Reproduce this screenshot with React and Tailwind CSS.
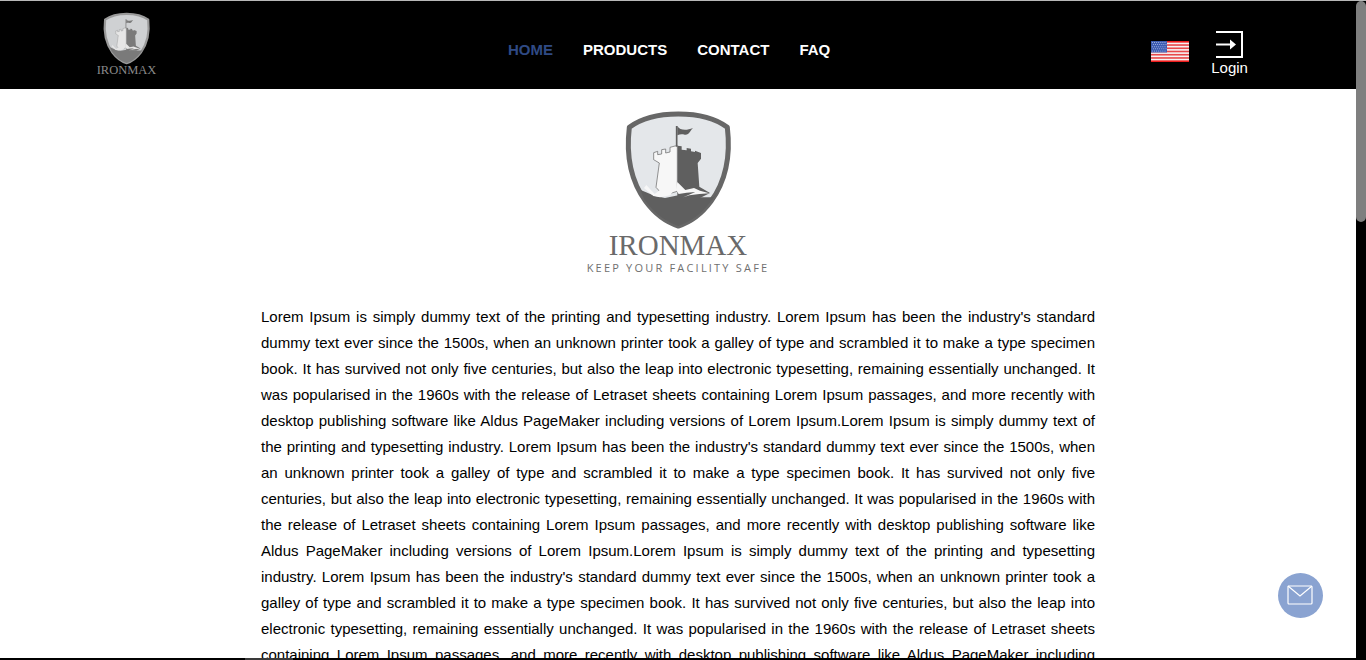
const LOREM = "Lorem Ipsum is simply dummy text of the printing and typesetting industry. Lorem Ipsum has been the industry's standard dummy text ever since the 1500s, when an unknown printer took a galley of type and scrambled it to make a type specimen book. It has survived not only five centuries, but also the leap into electronic typesetting, remaining essentially unchanged. It was popularised in the 1960s with the release of Letraset sheets containing Lorem Ipsum passages, and more recently with desktop publishing software like Aldus PageMaker including versions of Lorem Ipsum.";

function Shield({ rim, sky, ground, light, dark, className }) {
  return (
    <svg viewBox="0 0 348 372" className={className}>
      <path d="M175 18 C230 18 285 30 322 58 C333 150 313 225 273 280 C245 318 210 343 175 354 C140 343 105 318 77 280 C37 225 17 150 28 58 C65 30 120 18 175 18 Z" fill={sky} stroke={rim} strokeWidth="15" strokeLinejoin="round" />
      <path d="M62 246 L105 264 L135 270 L175 262 L215 268 L280 268 L298 244 C290 258 282 270 273 280 C245 318 210 343 175 354 C140 343 105 318 77 280 C70 272 66 258 62 246 Z" fill={ground} />
      <path d="M172 113 L185 115 L185 125 L200 127 L200 120 L213 122 L213 130 L225 132 L225 128 L243 135 L243 152 L233 165 L238 236 L270 255 L240 270 L172 270 Z" fill={dark} />
      <path d="M172 113 L165 114 L150 118 L150 132 L137 135 L137 123 L125 125 L125 138 L113 140 L113 130 L101 134 L101 155 L118 165 L108 238 L130 262 L172 250 Z" fill={light} stroke={dark} strokeWidth="2" strokeLinejoin="round" />
      <path d="M170 116 L170 54" stroke={dark} strokeWidth="5" />
      <path d="M172 54 C180 68 200 68 219 60 C210 68 208 82 194 80 C186 78 180 78 172 82 Z" fill={dark} />
      <path d="M72 240 L79 231 L92 245 L104 258 L120 246 L134 252 L148 241 L158 252 L150 262 L120 268 L100 264 Z" fill={light} />
      <path d="M168 245 L172 222 L196 246 L222 240 L240 248 L268 256 L238 258 L208 262 L190 268 L226 252 L200 254 L176 258 Z" fill={light} />
    </svg>
  );
}

function Flag() {
  const stripes = Array.from({ length: 13 }, (_, i) => i);
  const dots = [];
  for (let r = 0; r < 5; r++) for (let c = 0; c < 7; c++) dots.push([1.4 + c * 2.1 + (r % 2 ? 1 : 0), 1.5 + r * 2.1]);
  return (
    <svg width="38" height="21" viewBox="0 0 38 21" className="shrink-0">
      <rect width="38" height="21" fill="#f6f2f2" />
      {stripes.filter((i) => i % 2 === 0).map((i) => (
        <rect key={i} x="0" y={(i * 21) / 13} width="38" height={21 / 13} fill={i === 12 || i === 0 ? "#ee1c1c" : "#e8484a"} />
      ))}
      <rect width="16" height="11.5" fill="#3c5cb2" />
      {dots.map(([x, y], i) => (
        <circle key={i} cx={x} cy={y} r="0.5" fill="#b9c6ea" />
      ))}
    </svg>
  );
}

export default function App() {
  return (
    <div className="h-[660px] w-full overflow-hidden flex flex-col bg-white font-['Liberation_Sans',Arial,sans-serif]">
      <div className="h-px bg-[#b8b8b8] shrink-0" />
      <div className="flex-1 min-h-0 flex">
        <div className="flex-1 min-w-0 overflow-hidden">
          <header className="h-[88px] bg-black flex items-start text-white">
            <div className="ml-[97px] mt-[10px] w-[59px] flex flex-col items-center">
              <Shield className="w-[51px] h-[55px]" rim="#9a9a9a" sky="#cfd1d3" ground="#7a7a7a" light="#e6e6e6" dark="#7a7a7a" />
              <span className="mt-[-2px] text-[12.5px] leading-[13px] font-['Liberation_Serif',serif] text-[#8a8a8a] whitespace-nowrap">IRONMAX</span>
            </div>
            <nav className="ml-[352px] mt-[40px] flex gap-[30px] text-[15px] leading-[18px] font-bold">
              <a className="text-[#2f4a84]">HOME</a>
              <a>PRODUCTS</a>
              <a>CONTACT</a>
              <a>FAQ</a>
            </nav>
            <div className="ml-[321px] mt-[40px]"><Flag /></div>
            <div className="ml-[22px] mt-[30px] flex flex-col items-center">
              <svg width="28" height="27" viewBox="0 0 28 27" fill="none" stroke="white" strokeWidth="2">
                <path d="M0 1 H26 V26 H0" />
                <path d="M0 13.5 H17" />
                <path d="M14 8.5 L20 13.5 L14 18.5 Z" fill="white" stroke="none" />
              </svg>
              <span className="text-[15px] leading-[17px] mt-[1px]">Login</span>
            </div>
          </header>
          <main className="flex flex-col items-center">
            <div className="mt-[19px] flex flex-col items-center">
              <Shield className="w-[116px] h-[124px]" rim="#676767" sky="#e4e7ea" ground="#5f5f5f" light="#f7f7f7" dark="#5f5f5f" />
              <span className="mt-[-2px] text-[29px] leading-[30px] font-['Liberation_Serif',serif] text-[#6a6a6a] whitespace-nowrap">IRONMAX</span>
              <span className="text-[11px] leading-[13px] mt-[1px] tracking-[2.2px] font-['Open_Sans',sans-serif] text-[#6f6f6f] whitespace-nowrap">KEEP YOUR FACILITY SAFE</span>
            </div>
            <p className="mt-[30px] w-[834px] text-[15px] leading-[26px] text-black text-justify">
              {LOREM}{LOREM}{LOREM}
            </p>
          </main>
        </div>
        <div className="w-[10px] shrink-0 bg-black">
          <div className="h-[221px] rounded-[5px] bg-[#7f7f7f]" />
        </div>
      </div>
      <div className="h-[2px] shrink-0 bg-black flex">
        <div className="ml-[245px] w-[48px] bg-[#3a3a3a]" />
      </div>
      <button className="fixed left-[1278px] top-[573px] w-[45px] h-[45px] rounded-full bg-[#8aa3d1] flex items-center justify-center">
        <svg width="26" height="20" viewBox="0 0 26 20" fill="none" stroke="white" strokeWidth="1.2" className="-translate-x-px -translate-y-px">
          <rect x="1" y="1" width="24" height="18" rx="1" />
          <path d="M1 1 L13 11 L25 1" />
        </svg>
      </button>
    </div>
  );
}
